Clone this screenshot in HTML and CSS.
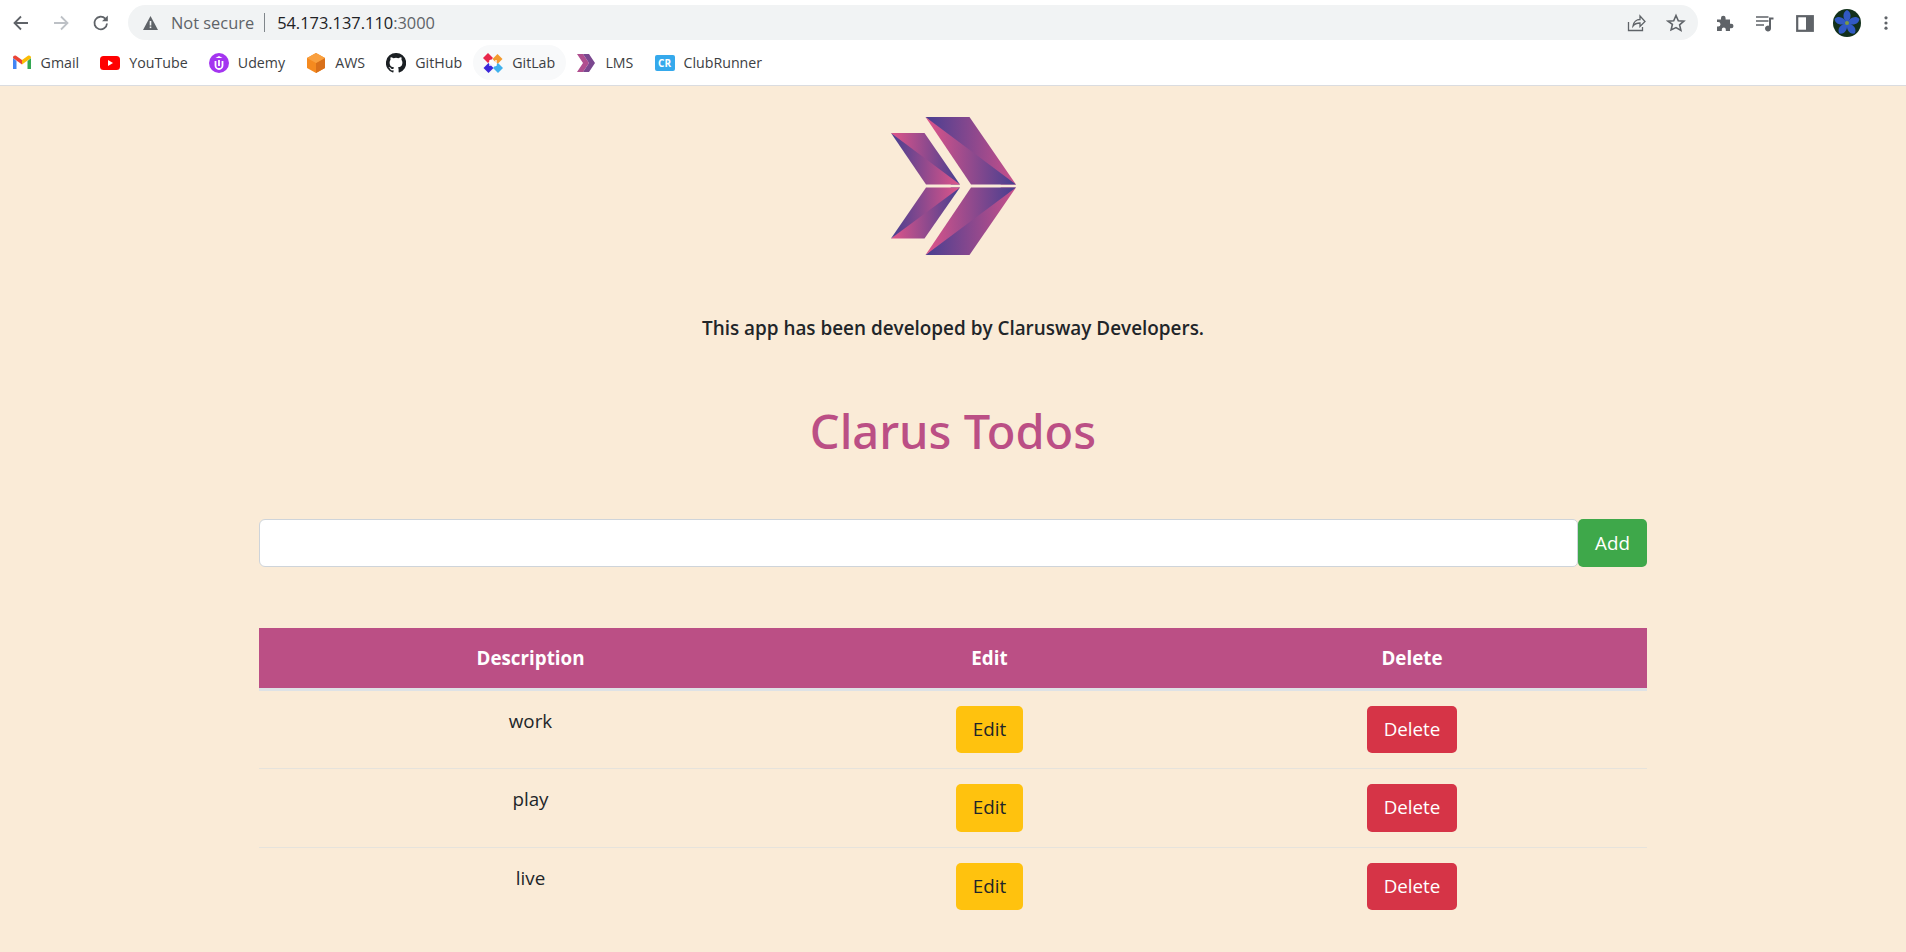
FILE: index.html
```html
<!DOCTYPE html>
<html lang="en">
<head>
  <meta charset="UTF-8">
  <title>Clarus Todos</title>
  <link rel="stylesheet" href="styles.css">
</head>
<body>
  <div class="browser">
    <div class="toolbar">
      <svg class="nav-icon" viewBox="0 0 20 20"><path d="M17 10H4M10 3.500 3.500 10l6.500 6.500" fill="none" stroke="#5f6368" stroke-width="1.800"/></svg>
      <svg class="nav-icon" viewBox="0 0 20 20"><path d="M3 10h13M10 3.500l6.500 6.500-6.500 6.500" fill="none" stroke="#bdc1c6" stroke-width="1.800"/></svg>
      <svg class="nav-icon" viewBox="0 0 20 20"><path d="M16 10.500a6.300 6.300 0 1 1-1.700-4.800" fill="none" stroke="#5f6368" stroke-width="1.800"/><path d="M16.800 2.500v5.800H11z" fill="#5f6368"/></svg>
      <div class="omnibox">
        <svg class="warn-icon" viewBox="0 0 16 16"><path d="M8 1 15.500 15H.5z" fill="#5f6368"/><rect x="7.200" y="6" width="1.600" height="4.500" fill="#f1f3f4"/><rect x="7.200" y="11.500" width="1.600" height="1.600" fill="#f1f3f4"/></svg>
        <span class="not-secure">Not secure</span>
        <span class="omni-sep"></span>
        <span class="url">54.173.137.110<span class="url-port">:3000</span></span>
        <span class="omni-spacer"></span>
        <svg class="omni-icon" viewBox="0 0 20 20"><path d="M2.500 9v8.500h14V14M7 13c.5-4 3.500-6.500 7-6.500V3l5 5.500-5 5V10c-3 0-5.500 1-7 3z" fill="none" stroke="#5f6368" stroke-width="1.300"/></svg>
        <svg class="omni-icon star" viewBox="0 0 20 20"><path d="M10 2.500l2.300 5.200 5.600.5-4.300 3.700 1.300 5.500L10 14.600l-4.900 2.300 1.300-5.500L2.100 8.200l5.600-.5z" fill="none" stroke="#5f6368" stroke-width="1.600"/></svg>
      </div>
      <div class="toolbar-actions">
        <svg class="act-icon" viewBox="0 0 20 20"><path d="M2 6.500h4V5a2.300 2.300 0 0 1 4.600 0v1.500h4.400v4.200h1.200a2.300 2.300 0 0 1 0 4.600H15V18h-4.200v-1.500a2 2 0 0 0-4 0V18H2v-4.500h1.200a2.300 2.300 0 0 0 0-4.600H2z" fill="#5f6368"/></svg>
        <svg class="act-icon" viewBox="0 0 20 20"><path d="M1 4h12.500M1 8h12.500M1 12h8" stroke="#5f6368" stroke-width="1.500" fill="none"/><path d="M14 4.500h4.500v2H16v9a3 3 0 1 1-2-2.800z" fill="#5f6368"/></svg>
        <svg class="act-icon" viewBox="0 0 20 20"><rect x="2.200" y="3.200" width="15.600" height="14.600" fill="none" stroke="#5f6368" stroke-width="2.200"/><rect x="11" y="3" width="7" height="15" fill="#5f6368"/></svg>
        <svg class="avatar" viewBox="0 0 28 28">
          <circle cx="14" cy="14" r="14" fill="#12301c"/>
          <g fill="#3159c4">
            <path d="M14 14C9 9 9.500 3 14 1c4.500 2 5 8 0 13z"/>
            <path d="M14 14C9 9 9.500 3 14 1c4.500 2 5 8 0 13z" transform="rotate(72 14 14)"/>
            <path d="M14 14C9 9 9.500 3 14 1c4.500 2 5 8 0 13z" transform="rotate(144 14 14)"/>
            <path d="M14 14C9 9 9.500 3 14 1c4.500 2 5 8 0 13z" transform="rotate(216 14 14)"/>
            <path d="M14 14C9 9 9.500 3 14 1c4.500 2 5 8 0 13z" transform="rotate(288 14 14)"/>
          </g>
          <circle cx="14" cy="14" r="2" fill="#7d9a45"/>
        </svg>
        <svg class="act-icon menu-dots" viewBox="0 0 20 20"><g fill="#5f6368"><circle cx="10" cy="3.500" r="2"/><circle cx="10" cy="10" r="2"/><circle cx="10" cy="16.500" r="2"/></g></svg>
      </div>
    </div>
    <div class="bookmarks">
      <span class="bookmark">
        <svg viewBox="0 0 20 20"><path d="M1 5v11h3.500V8z" fill="#4285f4"/><path d="M19 5v11h-3.500V8z" fill="#34a853"/><path d="M1 5l9 6.500V7L4 2.800C2.500 2.200 1 3 1 5z" fill="#ea4335"/><path d="M19 5l-9 6.500V7l6-4.200c1.500-.6 3 .2 3 2.200z" fill="#fbbc04"/></svg>
        Gmail
      </span>
      <span class="bookmark">
        <svg viewBox="0 0 20 20"><rect y="3" width="20" height="14" rx="3.500" fill="#f00"/><path d="M8 7v6l5-3z" fill="#fff"/></svg>
        YouTube
      </span>
      <span class="bookmark">
        <svg viewBox="0 0 20 20"><circle cx="10" cy="10" r="10" fill="#a435f0"/><path d="M6.500 8v4.500a3.500 3.500 0 0 0 7 0V8" fill="none" stroke="#fff" stroke-width="1.800"/><path d="M10 3 6.500 5h7z" fill="#fff"/><path d="M10 7v6" stroke="#fff" stroke-width="1.800"/></svg>
        Udemy
      </span>
      <span class="bookmark">
        <svg viewBox="0 0 20 20"><path d="M10 0l9 5v10l-9 5-9-5V5z" fill="#f58a1f"/><path d="M10 10l9-5v10l-9 5z" fill="#d9701a"/><path d="M10 0l9 5-9 5-9-5z" fill="#f9a03f"/></svg>
        AWS
      </span>
      <span class="bookmark">
        <svg viewBox="0 0 20 20"><path d="M10 0a10 10 0 0 0-3.200 19.500c.5.100.7-.2.7-.5v-1.700c-2.800.6-3.400-1.300-3.400-1.300-.5-1.200-1.100-1.500-1.100-1.500-.9-.6.100-.6.100-.6 1 .1 1.500 1 1.500 1 .9 1.500 2.300 1.100 2.900.8.100-.6.300-1.100.6-1.300-2.200-.3-4.500-1.100-4.500-4.900 0-1.100.4-2 1-2.700-.1-.3-.4-1.300.1-2.600 0 0 .8-.3 2.800 1a9.500 9.500 0 0 1 5 0c1.900-1.300 2.800-1 2.800-1 .5 1.400.2 2.400.1 2.600.6.700 1 1.600 1 2.700 0 3.800-2.300 4.700-4.500 4.900.4.300.7.900.7 1.900V19c0 .3.200.6.700.5A10 10 0 0 0 10 0z" fill="#1b1f23"/></svg>
        GitHub
      </span>
      <span class="bookmark bookmark-hover">
        <svg viewBox="0 0 20 20"><path d="M5 0l5 5-5 5-5-5z" fill="#e8274b"/><path d="M14.500 1l5 5-5 5-5-5z" fill="#f39a2e"/><path d="M5.500 10l5 5-5 5-5-5z" fill="#3b26d9"/><path d="M15 10l5 5-5 5-5-5z" fill="#3fb1ec"/><path d="M7 7v6M13 7v6M7 7l6 6" stroke="#fff" stroke-width="1.300" fill="none"/></svg>
        GitLab
      </span>
      <span class="bookmark">
        <svg viewBox="0 0 20 20"><path d="M1 1h6l6 9-6 9H1l6-9z" fill="#b04f8f"/><path d="M7 1h6l6 9-6 9H7l6-9z" fill="#7a478f"/></svg>
        LMS
      </span>
      <span class="bookmark">
        <span class="cr-badge">CR</span>
        ClubRunner
      </span>
    </div>
  </div>

  <main class="app">
    <svg class="logo" viewBox="0 0 126 138">
      <defs>
        <linearGradient id="toRight" gradientUnits="userSpaceOnUse" x1="34" y1="0" x2="125" y2="0"><stop offset="0" stop-color="#473f91"/><stop offset="1" stop-color="#c9508a"/></linearGradient>
        <linearGradient id="toLeft" gradientUnits="userSpaceOnUse" x1="34" y1="0" x2="125" y2="0"><stop offset="0" stop-color="#e0558a"/><stop offset="1" stop-color="#453f90"/></linearGradient>
        <linearGradient id="smallRight" gradientUnits="userSpaceOnUse" x1="0" y1="0" x2="69" y2="0"><stop offset="0" stop-color="#453f90"/><stop offset="1" stop-color="#e0558a"/></linearGradient>
        <linearGradient id="smallLeft" gradientUnits="userSpaceOnUse" x1="0" y1="0" x2="69" y2="0"><stop offset="0" stop-color="#e0558a"/><stop offset="1" stop-color="#453f90"/></linearGradient>
      </defs>
      <!-- outer halves run past the diagonal so no seam shows under the inner halves -->
      <path d="M34.500 0h44L125 67.500H110z" fill="url(#toRight)"/>
      <path d="M34.500 0 125 67.500H80z" fill="url(#toLeft)"/>
      <path d="M34.500 138h44L125 70.500H110z" fill="url(#toRight)"/>
      <path d="M34.500 138 125 70.500H80z" fill="url(#toLeft)"/>
      <path d="M0 16h33.500L69 67.500H60z" fill="url(#smallLeft)"/>
      <path d="M0 16 69 67.500H35z" fill="url(#smallRight)"/>
      <path d="M0 121.500h33.500L69 70.500H60z" fill="url(#smallLeft)"/>
      <path d="M0 121.500 69 70.500H35z" fill="url(#smallRight)"/>
    </svg>
    <p class="credit">This app has been developed by Clarusway Developers.</p>
    <h1 class="title">Clarus Todos</h1>
    <form class="add-form">
      <input class="todo-input" type="text">
      <button class="btn btn-add" type="button">Add</button>
    </form>
    <table class="todo-table">
      <thead>
        <tr>
          <th class="col-desc">Description</th>
          <th class="col-edit">Edit</th>
          <th class="col-delete">Delete</th>
        </tr>
      </thead>
      <tbody>
        <tr>
          <td>work</td>
          <td><button class="btn btn-edit" type="button">Edit</button></td>
          <td><button class="btn btn-delete" type="button">Delete</button></td>
        </tr>
        <tr>
          <td>play</td>
          <td><button class="btn btn-edit" type="button">Edit</button></td>
          <td><button class="btn btn-delete" type="button">Delete</button></td>
        </tr>
        <tr class="last-row">
          <td>live</td>
          <td><button class="btn btn-edit" type="button">Edit</button></td>
          <td><button class="btn btn-delete" type="button">Delete</button></td>
        </tr>
      </tbody>
    </table>
  </main>
</body>
</html>
```

FILE: styles.css
```css
* {
  box-sizing: border-box;
}
html, body {
  height: 100%;
}
body {
  margin: 0;
  font-family: "Open Sans", "Noto Sans", Arial, sans-serif;
  background: #faebd7;
  color: #212529;
  overflow: hidden;
}

/* browser chrome */
.browser {
  background: #fff;
  border-bottom: 1px solid #dadce0;
  height: 86px;
}
.toolbar {
  display: flex;
  align-items: center;
  height: 40px;
  padding: 5px 0 0 11px;
}
.nav-icon {
  width: 20px;
  height: 20px;
  margin-right: 20px;
  flex: none;
}
.omnibox {
  display: flex;
  align-items: center;
  width: 1570px;
  height: 35px;
  margin-left: -3px;
  padding: 0 12px 0 14px;
  background: #f1f3f4;
  border-radius: 18px;
  font-size: 16.400px;
  flex: none;
}
.warn-icon {
  width: 17px;
  height: 16px;
  margin-right: 12px;
}
.not-secure {
  color: #5f6368;
}
.omni-sep {
  width: 1px;
  height: 19px;
  margin: 0 12px 0 10px;
  background: #80868b;
}
.url {
  color: #202124;
}
.url-port {
  color: #5f6368;
}
.omni-spacer {
  flex: 1;
}
.omni-icon {
  width: 20px;
  height: 20px;
}
.star {
  margin-left: 20px;
}
.toolbar-actions {
  display: flex;
  align-items: center;
  margin-left: 17px;
  gap: 20px;
}
.act-icon {
  width: 20px;
  height: 20px;
}
.avatar {
  width: 28px;
  height: 28px;
  margin-left: -2px;
}
.menu-dots {
  width: 16px;
  margin-left: -3px;
}
.bookmarks {
  display: flex;
  align-items: center;
  height: 45px;
  padding-left: 1px;
  font-size: 14.200px;
  color: #3c4043;
}
.bookmark {
  display: flex;
  align-items: center;
  height: 35px;
  padding: 0 10.600px;
  gap: 9px;
  border-radius: 18px;
}
.bookmark svg {
  width: 20px;
  height: 20px;
  flex: none;
}
.bookmark-hover {
  background: #f8f9fa;
}
.cr-badge {
  width: 20px;
  height: 16px;
  border-radius: 2px;
  background: #35a9ec;
  color: #fff;
  font-size: 10px;
  font-weight: 700;
  line-height: 16px;
  text-align: center;
}

/* app */
.app {
  display: flex;
  flex-direction: column;
  align-items: center;
  padding: 31px 259px 0;
}
.logo {
  width: 126px;
  height: 138px;
  display: block;
  flex: none;
  margin-left: 2px;
}
.credit {
  margin: 58px 0 0;
  font-size: 18.900px;
  font-weight: 600;
  line-height: 30px;
}
.title {
  margin: 58px 0 0;
  font-family: "Noto Sans", "Open Sans", sans-serif;
  font-size: 47px;
  font-weight: 500;
  line-height: 60px;
  color: #bb4f85;
}
.add-form {
  display: flex;
  width: 100%;
  margin-top: 58px;
}
.todo-input {
  flex: 1;
  height: 48px;
  padding: 0 15px;
  border: 1px solid #ced4da;
  border-radius: 6px 5px 5px 6px;
  background: #fff;
}
.btn {
  display: inline-block;
  height: 47.500px;
  padding: 0;
  border: none;
  border-radius: 5px;
  font-family: inherit;
  font-size: 18.800px;
  line-height: 47px;
  vertical-align: top;
}
.btn-add {
  width: 69px;
  height: 48px;
  background: #3ea84a;
  color: #fff;
}
.btn-edit {
  width: 67px;
  background: #ffc20e;
  color: #212529;
}
.btn-delete {
  width: 90px;
  background: #d63447;
  color: #fff;
}
.todo-table {
  width: 100%;
  margin-top: 61px;
  border-collapse: collapse;
  table-layout: fixed;
  font-size: 18.800px;
}
.todo-table th {
  height: 61px;
  background: #bb4f85;
  color: #fff;
  font-weight: 700;
  border-bottom: 3px solid #dee2e6;
}
.col-desc {
  width: 543px;
}
.col-edit {
  width: 375px;
}
.todo-table td {
  padding: 15px 10px;
  text-align: center;
  line-height: 30px;
  vertical-align: top;
  border-bottom: 1px solid #e6e3dc;
  height: 78.750px;
}
.last-row td {
  border-bottom: none;
}
```
